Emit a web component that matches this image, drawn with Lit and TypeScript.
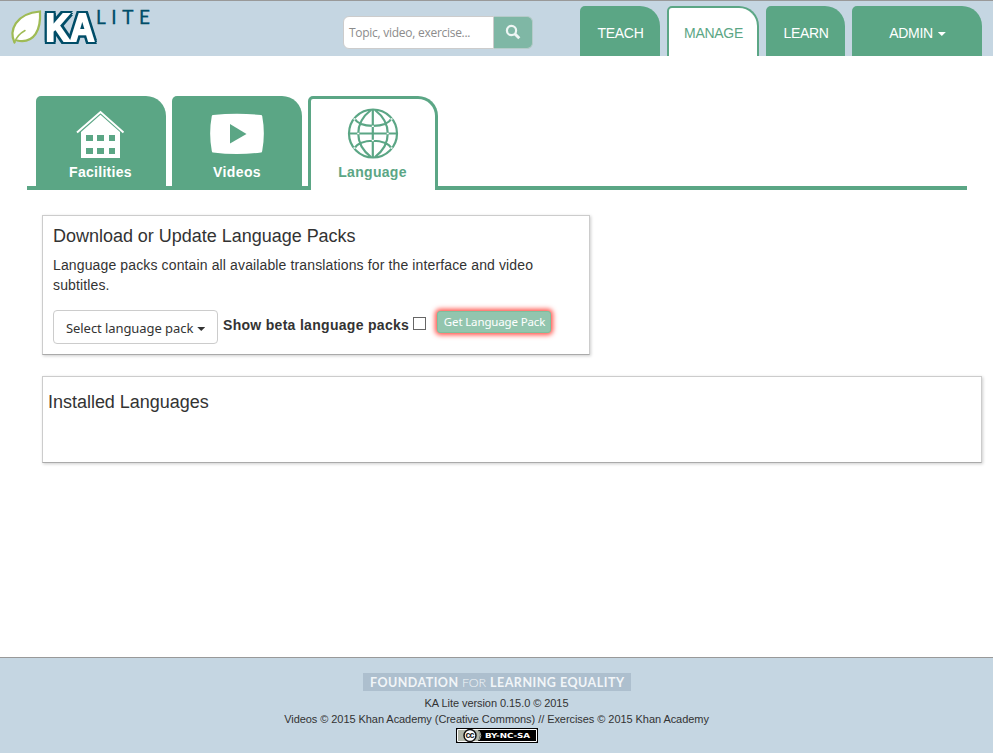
import { LitElement, html, css, svg } from "lit";
import { customElement } from "lit/decorators.js";

const logo = svg`
  <path d="M14.5 42.5C9 31 15 13.500 40 11.500C41 29 35 44 17 40.500" fill="#fff" stroke="#9fbb55" stroke-width="2.200" stroke-linecap="round"/>
  <path d="M14.500 42.500Q17 35 25 30.500" fill="none" stroke="#9fbb55" stroke-width="1.500" stroke-linecap="round"/>
  <text class="ka" x="45.500" y="40.500" textLength="49" lengthAdjust="spacingAndGlyphs">KA</text>
  <text class="lite" x="96" y="23.500" textLength="54" lengthAdjust="spacing">LITE</text>`;

@customElement("app-root")
export class AppRoot extends LitElement {
  static styles = css`
    :host { display: flex; flex-direction: column; width: 993px; height: 753px; background: #fff;
      font: 14px/20px "Liberation Sans", Arial, sans-serif; color: #333; }
    * { box-sizing: border-box; }
    svg { display: block; }
    header { height: 56px; background: #c5d6e2; border-top: 1px solid #999; display: flex; flex: none; }
    .logo { width: 160px; height: 55px; margin-right: 183px; flex: none; }
    .ka { font: bold 39px "Liberation Sans", sans-serif; fill: #fff; stroke: #fff; stroke-width: 2px; stroke-miterlimit: 3;
      filter: drop-shadow(2px 0 0 #004d68) drop-shadow(-2px 0 0 #004d68) drop-shadow(0 2px 0 #004d68) drop-shadow(0 -2px 0 #004d68); }
    .lite { font: 19px Lato, sans-serif; fill: #004d68; stroke: #004d68; stroke-width: .3px; }
    .search { display: flex; width: 190px; height: 33px; margin: 15px 47px 0 0; flex: none; }
    .field { width: 151px; border: 1px solid #ccc; border-radius: 6px 0 0 6px; background: #fff; color: #8c8c8c;
      font: 12px/31px "Open Sans", sans-serif; padding: 0 0 0 5px; white-space: nowrap; letter-spacing: -.3px; word-spacing: .3px; }
    .go { width: 39px; border: 1px solid #b5cbc9; border-left: 0; border-radius: 0 6px 6px 0; background: #7fb7a5;
      display: flex; align-items: center; justify-content: center; padding-bottom: 1px; }
    nav { display: flex; gap: 7px; padding-top: 5px; }
    .link { height: 50px; background: #5ba685; color: #fff; border-radius: 5px 20px 0 0; line-height: 20px;
      display: flex; justify-content: center; padding: 17px 0 0 1px; width: 80px; letter-spacing: -.3px; }
    .link.on { width: 92px; background: #fff; color: #5ba685; border: 2px solid #5ba685; border-bottom: 0; padding-top: 15px; }
    .learn { width: 79px; }
    .admin { width: 130px; }
    .caret { width: 8px; height: 4px; flex: none; background: currentColor; clip-path: polygon(0 0, 100% 0, 50% 100%); }
    .admin .caret { margin: 9px 0 0 5px; }
    .tabs { display: flex; gap: 6px; width: 940px; height: 94px; margin: 40px 0 0 27px; padding-left: 9px; flex: none;
      background: linear-gradient(#5ba685, #5ba685) 0 100% / 100% 4px no-repeat; }
    .tab { width: 130px; height: 94px; border-radius: 5px 20px 0 0; background: #5ba685; color: #fff;
      font-weight: bold; display: flex; flex-direction: column; align-items: center; }
    .tab svg { width: 124px; height: 66px; }
    .tab.on { background: #fff; color: #5ba685; border: 3px solid #5ba685; border-bottom: 0; }
    .tab.on svg { height: 63px; }
    .facilities { letter-spacing: .3px; margin-right: 1px; }
    .videos { letter-spacing: .42px; }
    .language { letter-spacing: .32px; margin-right: 1px; }
    .panel { border: 1px solid #ccc; border-bottom-color: #aaa; box-shadow: 1px 1px 3px rgba(0,0,0,.2); margin-left: 42px; flex: none; }
    .packs { width: 548px; height: 140px; margin-top: 25px; padding: 10px; }
    h2 { margin: 0; font: 18px/20px "Liberation Sans", sans-serif; letter-spacing: -.02px; }
    .packs p { margin: 9px 0 15px; width: 510px; letter-spacing: .13px; }
    .controls { display: flex; align-items: flex-start; white-space: nowrap; }
    .select { width: 165px; height: 34px; border: 1px solid #ccc; border-radius: 4px; display: flex; padding: 7px 0 0 12px;
      font: 13px/20px "Noto Sans", sans-serif; letter-spacing: -.07px; }
    .select .caret { margin: 9px 0 0 4px; }
    .beta { font-weight: bold; margin: 5px 0 0 5px; width: 190px; letter-spacing: .3px; }
    .check { width: 13px; height: 13px; border: 1px solid #666; margin-top: 7px; background: #fff; }
    .get { width: 114px; height: 22px; margin: 1px 0 0 11px; padding-left: 1px; border: 1px solid #7fbf9d; border-radius: 3px; background: #92c5ae; color: #fff;
      box-shadow: 0 0 5px 2px #ff5148; font: 11.500px/20px "Noto Sans", sans-serif; letter-spacing: -.15px; text-align: center; }
    .installed { width: 940px; height: 87px; margin-top: 21px; padding: 15px 5px; }
    footer { margin-top: auto; height: 96px; background: #c5d6e2; border-top: 1px solid #999; padding-top: 15px;
      display: flex; flex-direction: column; align-items: center; font-size: 11px; line-height: 16px; letter-spacing: -.06px; }
    .fle { width: 268px; height: 18px; background: #adbfce; margin: 0 0 4px 1px; }
    .fle text { font: bold 12.500px Lato, sans-serif; fill: #f1f5f8; }
    .fle .light { font-weight: 300; }
    .cc { width: 82px; height: 15px; margin-top: 1px; margin-left: 1px; }
    .cc .by { font: bold 7px "DejaVu Sans", sans-serif; fill: #fff; }
    .cc .c { font: bold 9px "Liberation Sans", sans-serif; fill: #111; }
  `;

  render() {
    return html`
      <header>
        <svg class="logo" viewBox="0 1 160 55">${logo}</svg>
        <div class="search">
          <div class="field">Topic, video, exercise...</div>
          <div class="go"><svg width="16" height="16" viewBox="0 0 16 16" fill="none" stroke="#eef6f4"><circle cx="6.5" cy="6.5" r="4.6" stroke-width="2.2"/><path d="M10 10l4.300 4.200" stroke-width="3"/></svg></div>
        </div>
        <nav>
          <div class="link"><span>TEACH</span></div>
          <div class="link on"><span>MANAGE</span></div>
          <div class="link learn"><span>LEARN</span></div>
          <div class="link admin"><span>ADMIN</span><i class="caret"></i></div>
        </nav>
      </header>
      <div class="tabs">
        <div class="tab">
          <svg viewBox="0 0 124 66">
            <path d="M38 36.500L61.500 16l23 20.500" fill="none" stroke="#fff" stroke-width="2"/>
            <path d="M42 36L61.500 18.800L81 36V62H42z" fill="#fff"/>
            <path d="M47 39h7v6h-7zM58 39h7v6h-7zM70 39h6v6h-6zM47 52h7v6h-7zM58 52h7v6h-7zM70 52h6v6h-6z" fill="#5ba685"/>
          </svg>
          <span class="facilities">Facilities</span>
        </div>
        <div class="tab">
          <svg viewBox="0 0 124 66">
            <path d="M38 19Q62 16.500 86 19Q87 19 87.200 20Q90.500 37.500 87.200 55Q87 56.500 86 56.500Q62 59.500 38 56.500Q37 56.500 36.800 55Q33.500 37.500 36.800 20Q37 19 38 19z" fill="#fff"/>
            <path d="M55 28v19.500L71.500 38z" fill="#5ba685"/>
          </svg>
          <span class="videos">Videos</span>
        </div>
        <div class="tab on">
          <svg viewBox="0 3 124 63" fill="none" stroke="#5ba685" stroke-width="2.200">
            <circle cx="62" cy="37.500" r="24"/>
            <path d="M61.800 14v47M38 37.500h48M60 14C43 27 43 48 60 61M64 14C81 27 81 48 64 61M43 22C49 32.500 75 32.500 81 22M43 53C49 42 75 42 81 53"/>
            <path d="M60.800 30.200h2M60.800 44.500h2M46.300 37.500h2M75.700 37.500h2M42.500 23h2M79.500 23h2M42.500 52h2M79.500 52h2" stroke="#fff" stroke-width="1.500"/>
          </svg>
          <span class="language">Language</span>
        </div>
      </div>
      <section class="panel packs">
        <h2>Download or Update Language Packs</h2>
        <p>Language packs contain all available translations for the interface and video subtitles.</p>
        <div class="controls">
          <div class="select"><span>Select language pack</span><i class="caret"></i></div>
          <span class="beta">Show beta language packs</span>
          <i class="check"></i>
          <div class="get">Get Language Pack</div>
        </div>
      </section>
      <section class="panel installed"><h2>Installed Languages</h2></section>
      <footer>
        <svg class="fle" viewBox="0 0 268 18">
          <text x="7" y="13.500" textLength="88">FOUNDATION</text>
          <text class="light" x="99" y="13.500" textLength="24">FOR</text>
          <text x="127" y="13.500" textLength="134">LEARNING EQUALITY</text>
        </svg>
        <div>KA Lite version 0.15.0 © 2015</div>
        <div>Videos © 2015 Khan Academy (Creative Commons) // Exercises © 2015 Khan Academy</div>
        <svg class="cc" viewBox="0 0 82 15">
          <path d="M0 0h82v15H0z"/><path d="M1.500 1.500h79v12h-79z" stroke="#fff"/>
          <path d="M2 2h20q4 5 0 11H2z" fill="#b1b6a9"/>
          <circle cx="14" cy="7.500" r="6" fill="#fff" stroke="#111" stroke-width="1.500"/>
          <text class="c" x="9.500" y="10" textLength="9">cc</text>
          <path d="M23 3q3.500 4.500 0 9" fill="none" stroke="#b1b6a9"/>
          <text class="by" x="29" y="10" textLength="45" lengthAdjust="spacingAndGlyphs">BY-NC-SA</text>
        </svg>
      </footer>`;
  }
}
